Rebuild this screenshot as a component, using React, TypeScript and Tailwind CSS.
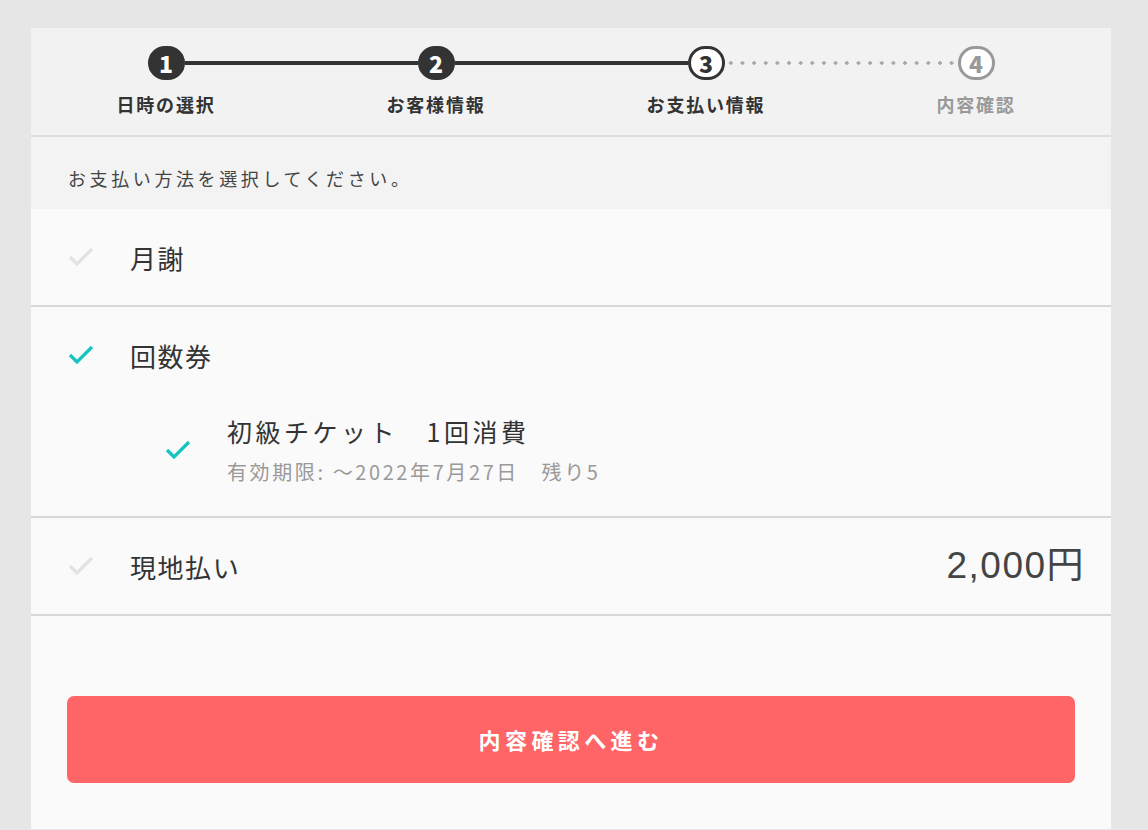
import React from 'react';

const FONT = { fontFamily: '"Noto Sans CJK JP", "Noto Sans", sans-serif' };

const steps = [
  { n: 1, label: '日時の選択' },
  { n: 2, label: 'お客様情報' },
  { n: 3, label: 'お支払い情報' },
  { n: 4, label: '内容確認' },
];

const Check: React.FC<{ active?: boolean }> = ({ active }) => (
  <svg width="26" height="22" viewBox="0 0 26 22" className="shrink-0">
    <polyline
      points="2,11 9,18 24,3"
      fill="none"
      stroke={active ? '#12c5bf' : '#e2e2e2'}
      strokeWidth="3.2"
    />
  </svg>
);

const Connector: React.FC<{ kind: 'none' | 'solid' | 'dotted' }> = ({ kind }) => {
  if (kind === 'solid') return <div className="flex-1 h-[4px] bg-[#333333]" />;
  if (kind === 'dotted')
    return (
      <div className="flex-1 h-[4px] bg-[radial-gradient(circle,#a6a6a6_1.5px,transparent_2px)] bg-[length:11.65px_4px] bg-repeat-x" />
    );
  return <div className="flex-1" />;
};

const StepBar: React.FC = () => {
  const current = 3;
  const link = (i: number): 'none' | 'solid' | 'dotted' => {
    if (i < 1 || i > 3) return 'none';
    return i + 1 <= current ? 'solid' : 'dotted';
  };
  return (
    <div className="grid grid-cols-4 h-[109px] bg-[#f2f2f2] border-b-2 border-[#dedede] pt-[18px]">
      {steps.map((s) => {
        const done = s.n < current;
        const isCur = s.n === current;
        const circle = done
          ? 'bg-[#333333] text-white border-[3px] border-[#333333]'
          : isCur
          ? 'bg-white text-[#333333] border-[3px] border-[#333333]'
          : 'bg-white text-[#999999] border-[3px] border-[#999999]';
        return (
          <div key={s.n} className="flex flex-col items-center">
            <div className="flex items-center w-full">
              <Connector kind={link(s.n - 1)} />
              <div
                className={`w-[37px] h-[34px] rounded-full flex items-center justify-center text-[23px] font-black leading-none ${circle}`}
              >
                {s.n}
              </div>
              <Connector kind={link(s.n)} />
            </div>
            <div
              className={`mt-[11px] text-[18px] font-bold tracking-[0.1em] ${
                s.n > current ? 'text-[#999999]' : 'text-[#333333]'
              }`}
            >
              {s.label}
            </div>
          </div>
        );
      })}
    </div>
  );
};

export default function App() {
  return (
    <div className="min-h-screen bg-[#e6e6e6] pt-[28px] pl-[31px]" style={FONT}>
      <div className="w-[1080px] bg-[#fafafa] pb-[46px]">
        <StepBar />

        <div className="h-[72px] bg-[#f3f3f3] flex items-center pl-[37px] pt-[10px] text-[18px] text-[#444444] tracking-[0.2em]">
          お支払い方法を選択してください。
        </div>

        <div className="h-[98px] flex items-center pl-[37px] border-b-2 border-[#d8d8d8]">
          <Check />
          <span className="ml-[36px] text-[26px] text-[#333333] tracking-[0.06em]">月謝</span>
        </div>

        <div className="border-b-2 border-[#d8d8d8] pb-[29px]">
          <div className="h-[96px] flex items-center pl-[37px]">
            <Check active />
            <span className="ml-[36px] text-[26px] text-[#333333] tracking-[0.06em]">回数券</span>
          </div>
          <div className="flex items-center pl-[134px] mt-[10px]">
            <Check active />
            <div className="ml-[36px]">
              <div className="text-[25px] text-[#333333] tracking-[0.14em] leading-[36px]">
                初級チケット　1回消費
              </div>
              <div className="text-[20px] text-[#999999] tracking-[0.13em] leading-[30px] mt-[8px]">
                有効期限: 〜2022年7月27日　残り5
              </div>
            </div>
          </div>
        </div>

        <div className="h-[98px] flex items-center pl-[37px] pr-[26px] border-b-2 border-[#d8d8d8]">
          <Check />
          <span className="ml-[36px] text-[26px] text-[#333333] tracking-[0.06em]">現地払い</span>
          <span
            className="ml-auto text-[37px] text-[#444444] tracking-[0.04em]"
            style={{ fontFamily: '"Liberation Sans", "Noto Sans CJK JP", sans-serif' }}
          >
            2,000円
          </span>
        </div>

        <div className="px-[36px] pt-[80px]">
          <button className="w-full h-[87px] rounded-[7px] bg-[#ff6567] text-white text-[22px] font-bold tracking-[0.2em]">
            内容確認へ進む
          </button>
        </div>
      </div>
    </div>
  );
}
